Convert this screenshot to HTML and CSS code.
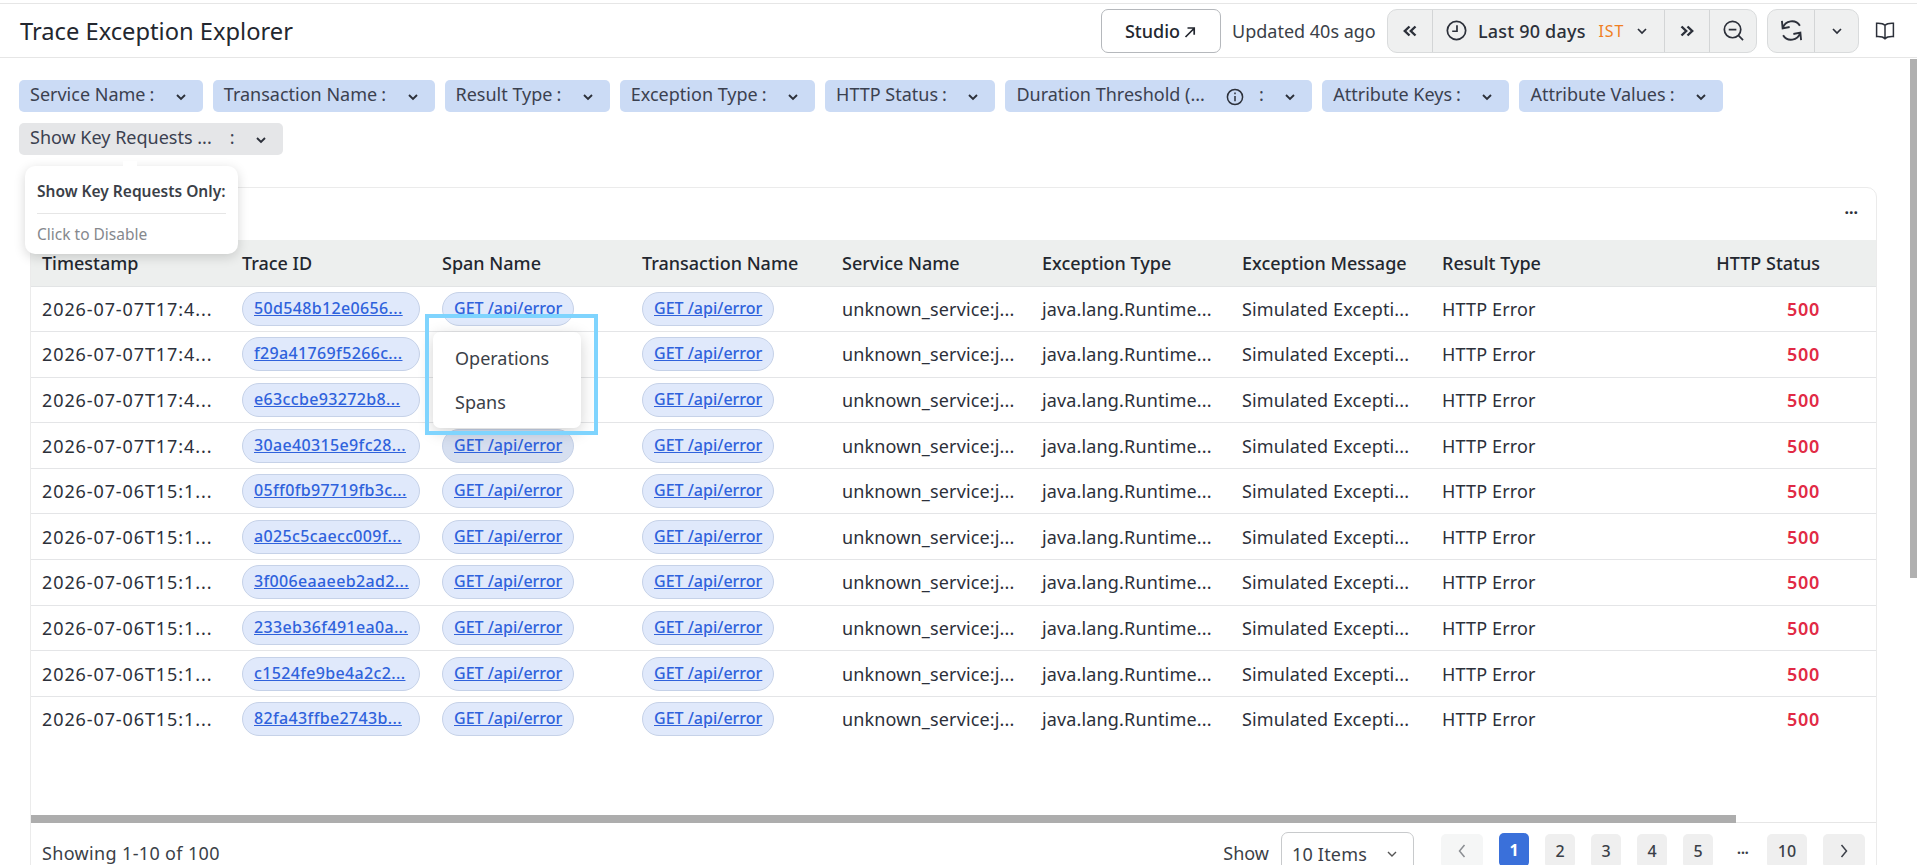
FILE: index.html
```html
<!DOCTYPE html>
<html lang="en">
<head>
  <meta charset="UTF-8" />
  <meta name="viewport" content="width=device-width, initial-scale=1.0" />
  <title>Trace Exception Explorer</title>
  <link rel="stylesheet" href="styles.css">
</head>
<body>
  <header class="top-bar">
    <h1 class="page-title">Trace Exception Explorer</h1>
    <div class="top-actions">
      <button class="studio-btn">Studio
        <svg class="ico-arrow" viewBox="0 0 14 14"><path d="M2.5 12 11 3.5M4.5 3H11.2V9.7"/></svg>
      </button>
      <span class="updated">Updated 40s ago</span>
      <div class="btn-group time-group">
        <div class="seg seg-prev"><svg class="ico-dbl" viewBox="0 0 16 14"><path d="M7.5 2.5 2.8 7l4.7 4.5M13.5 2.5 8.8 7l4.7 4.5"/></svg></div>
        <div class="seg seg-range">
          <svg class="ico-clock" viewBox="0 0 22 22"><circle cx="11" cy="11" r="9.6"/><path d="M11.5 5.5V11.8H6.5"/></svg>
          <span class="range-label">Last 90 days</span>
          <span class="range-tz">IST</span>
          <svg class="ico-chev" viewBox="0 0 12 8"><path d="M2 2 6 6l4-4"/></svg>
        </div>
        <div class="seg seg-next"><svg class="ico-dbl" viewBox="0 0 16 14"><path d="M2.5 2.5 7.2 7l-4.7 4.5M8.5 2.5 13.2 7l-4.7 4.5"/></svg></div>
        <div class="seg seg-zoom"><svg class="ico-zoom" viewBox="0 0 22 22"><circle cx="10" cy="10" r="8.6"/><path d="M6 10h8M16.4 16.4 21 21"/></svg></div>
      </div>
      <div class="btn-group refresh-group">
        <div class="seg seg-refresh"><svg class="ico-refresh" viewBox="2 2 18 18"><path d="M3.6 9A8 8 0 0 1 18.2 7M18.4 13A8 8 0 0 1 3.8 15M2.8 2.8 3.4 9.2 9.4 8M19.2 19.2 18.6 12.8 12.6 14"/></svg></div>
        <div class="seg seg-more"><svg class="ico-chev" viewBox="0 0 12 8"><path d="M2 2 6 6l4-4"/></svg></div>
      </div>
      <svg class="ico-book" viewBox="0 0 20 20"><path d="M10 4.2C8.4 2.6 5.4 2 1.6 2.2V15.6C5.4 15.4 8.4 16 10 17.6 11.6 16 14.6 15.4 18.4 15.6V2.2C14.6 2 11.6 2.6 10 4.2ZM10 4.2V18.6"/></svg>
    </div>
  </header>

  <section class="filters">
    <div class="chip"><span class="chip-text">Service Name</span><span class="colon">:</span><svg class="ico-chip" viewBox="0 0 12 8"><path d="M2 2 6 6l4-4"/></svg></div>
    <div class="chip"><span class="chip-text">Transaction Name</span><span class="colon">:</span><svg class="ico-chip" viewBox="0 0 12 8"><path d="M2 2 6 6l4-4"/></svg></div>
    <div class="chip"><span class="chip-text">Result Type</span><span class="colon">:</span><svg class="ico-chip" viewBox="0 0 12 8"><path d="M2 2 6 6l4-4"/></svg></div>
    <div class="chip"><span class="chip-text">Exception Type</span><span class="colon">:</span><svg class="ico-chip" viewBox="0 0 12 8"><path d="M2 2 6 6l4-4"/></svg></div>
    <div class="chip"><span class="chip-text">HTTP Status</span><span class="colon">:</span><svg class="ico-chip" viewBox="0 0 12 8"><path d="M2 2 6 6l4-4"/></svg></div>
    <div class="chip"><span class="chip-text">Duration Threshold (...</span><svg class="ico-info" viewBox="0 0 18 18"><circle cx="9" cy="9" r="7.6"/><path d="M9 8v5.2M9 4.6v1.6"/></svg><span class="colon">:</span><svg class="ico-chip" viewBox="0 0 12 8"><path d="M2 2 6 6l4-4"/></svg></div>
    <div class="chip"><span class="chip-text">Attribute Keys</span><span class="colon">:</span><svg class="ico-chip" viewBox="0 0 12 8"><path d="M2 2 6 6l4-4"/></svg></div>
    <div class="chip"><span class="chip-text">Attribute Values</span><span class="colon">:</span><svg class="ico-chip" viewBox="0 0 12 8"><path d="M2 2 6 6l4-4"/></svg></div>
    <div class="chip chip-off"><span class="chip-text">Show Key Requests ...</span><span class="colon colon-wide">:</span><svg class="ico-chip" viewBox="0 0 12 8"><path d="M2 2 6 6l4-4"/></svg></div>
  </section>

  <section class="card">
    <div class="card-head"><span class="card-menu">...</span></div>
    <table class="grid">
      <thead>
        <tr><th>Timestamp</th><th>Trace ID</th><th>Span Name</th><th>Transaction Name</th><th>Service Name</th><th>Exception Type</th><th>Exception Message</th><th>Result Type</th><th class="num">HTTP Status</th></tr>
      </thead>
      <tbody>
        <tr><td>2026-07-07T17:4...</td><td><a class="pill pill-id">50d548b12e0656...</a></td><td><a class="pill">GET /api/error</a></td><td><a class="pill">GET /api/error</a></td><td>unknown_service:j...</td><td>java.lang.Runtime...</td><td>Simulated Excepti...</td><td>HTTP Error</td><td class="num status">500</td></tr>
        <tr><td>2026-07-07T17:4...</td><td><a class="pill pill-id">f29a41769f5266c...</a></td><td></td><td><a class="pill">GET /api/error</a></td><td>unknown_service:j...</td><td>java.lang.Runtime...</td><td>Simulated Excepti...</td><td>HTTP Error</td><td class="num status">500</td></tr>
        <tr><td>2026-07-07T17:4...</td><td><a class="pill pill-id">e63ccbe93272b8...</a></td><td></td><td><a class="pill">GET /api/error</a></td><td>unknown_service:j...</td><td>java.lang.Runtime...</td><td>Simulated Excepti...</td><td>HTTP Error</td><td class="num status">500</td></tr>
        <tr><td>2026-07-07T17:4...</td><td><a class="pill pill-id">30ae40315e9fc28...</a></td><td><a class="pill pill-hover">GET /api/error</a></td><td><a class="pill">GET /api/error</a></td><td>unknown_service:j...</td><td>java.lang.Runtime...</td><td>Simulated Excepti...</td><td>HTTP Error</td><td class="num status">500</td></tr>
        <tr><td>2026-07-06T15:1...</td><td><a class="pill pill-id">05ff0fb97719fb3c...</a></td><td><a class="pill">GET /api/error</a></td><td><a class="pill">GET /api/error</a></td><td>unknown_service:j...</td><td>java.lang.Runtime...</td><td>Simulated Excepti...</td><td>HTTP Error</td><td class="num status">500</td></tr>
        <tr><td>2026-07-06T15:1...</td><td><a class="pill pill-id">a025c5caecc009f...</a></td><td><a class="pill">GET /api/error</a></td><td><a class="pill">GET /api/error</a></td><td>unknown_service:j...</td><td>java.lang.Runtime...</td><td>Simulated Excepti...</td><td>HTTP Error</td><td class="num status">500</td></tr>
        <tr><td>2026-07-06T15:1...</td><td><a class="pill pill-id">3f006eaaeeb2ad2...</a></td><td><a class="pill">GET /api/error</a></td><td><a class="pill">GET /api/error</a></td><td>unknown_service:j...</td><td>java.lang.Runtime...</td><td>Simulated Excepti...</td><td>HTTP Error</td><td class="num status">500</td></tr>
        <tr><td>2026-07-06T15:1...</td><td><a class="pill pill-id">233eb36f491ea0a...</a></td><td><a class="pill">GET /api/error</a></td><td><a class="pill">GET /api/error</a></td><td>unknown_service:j...</td><td>java.lang.Runtime...</td><td>Simulated Excepti...</td><td>HTTP Error</td><td class="num status">500</td></tr>
        <tr><td>2026-07-06T15:1...</td><td><a class="pill pill-id">c1524fe9be4a2c2...</a></td><td><a class="pill">GET /api/error</a></td><td><a class="pill">GET /api/error</a></td><td>unknown_service:j...</td><td>java.lang.Runtime...</td><td>Simulated Excepti...</td><td>HTTP Error</td><td class="num status">500</td></tr>
        <tr><td>2026-07-06T15:1...</td><td><a class="pill pill-id">82fa43ffbe2743b...</a></td><td><a class="pill">GET /api/error</a></td><td><a class="pill">GET /api/error</a></td><td>unknown_service:j...</td><td>java.lang.Runtime...</td><td>Simulated Excepti...</td><td>HTTP Error</td><td class="num status">500</td></tr>
      </tbody>
    </table>
    <div class="h-scroll"><div class="h-thumb"></div></div>
    <footer class="card-foot">
      <span class="showing">Showing 1-10 of 100</span>
      <div class="foot-right">
        <span class="show-label">Show</span>
        <div class="page-size">10 Items<svg class="ico-chev-thin" viewBox="0 0 12 8"><path d="M2 2 6 6l4-4"/></svg></div>
        <nav class="pager">
          <span class="page page-arrow page-dim"><svg class="ico-pg" viewBox="0 0 10 16"><path d="M7.5 2 2.5 8l5 6"/></svg></span>
          <span class="page page-on">1</span>
          <span class="page">2</span>
          <span class="page">3</span>
          <span class="page">4</span>
          <span class="page">5</span>
          <span class="page-dots">...</span>
          <span class="page page-wide">10</span>
          <span class="page page-arrow"><svg class="ico-pg" viewBox="0 0 10 16"><path d="M2.5 2 7.5 8l-5 6"/></svg></span>
        </nav>
      </div>
    </footer>
  </section>

  <div class="tooltip">
    <div class="tooltip-title">Show Key Requests Only:</div>
    <div class="tooltip-sub">Click to Disable</div>
  </div>
  <div class="context-menu">
    <div class="menu-item">Operations</div>
    <div class="menu-item">Spans</div>
  </div>
  <div class="highlight"></div>
  <div class="v-thumb"></div>
</body>
</html>
```

FILE: styles.css
```css
* {
  box-sizing: border-box;
}
html, body {
  height: 865px;
  overflow: hidden;
}
body {
  margin: 0;
  padding-top: 3px;
  position: relative;
  background: #fff;
  color: #2c303a;
  font-family: "Noto Sans", Arial, sans-serif;
  font-size: 18px;
}

/* header */
.top-bar {
  height: 55px;
  display: flex;
  align-items: center;
  justify-content: space-between;
  padding: 0 22px 0 20px;
  border-top: 1px solid #e6e6e6;
  border-bottom: 1px solid #e6e6e6;
}
.page-title {
  margin: 0;
  font-size: 23.7px;
  font-weight: 400;
  color: #23272f;
}
.top-actions {
  display: flex;
  align-items: center;
}
.studio-btn {
  width: 120px;
  height: 44px;
  display: flex;
  align-items: center;
  justify-content: center;
  gap: 3px;
  background: #fff;
  border: 1px solid #b5b8bc;
  border-radius: 7px;
  color: #23272f;
  font: 500 18px "Noto Sans", Arial, sans-serif;
}
.ico-arrow {
  width: 14px;
  height: 14px;
  margin-top: 3px;
  fill: none;
  stroke: #23272f;
  stroke-width: 1.7;
}
.updated {
  width: 155px;
  margin-left: 11px;
  white-space: nowrap;
  color: #3b3f48;
}
.btn-group {
  display: flex;
  height: 44px;
  background: #eff0f0;
  border: 1px solid #d9dbdc;
  border-radius: 10px;
}
.seg {
  display: flex;
  align-items: center;
  justify-content: center;
  border-left: 1px solid #d3d5d6;
}
.seg:first-child {
  border-left: 0;
}
.time-group {
  width: 370px;
}
.seg-prev { width: 44px; }
.seg-range {
  width: 232px;
  justify-content: flex-start;
  padding-left: 13px;
}
.seg-next { width: 45px; }
.seg-zoom { width: 47px; }
.refresh-group {
  width: 92px;
  margin-left: 10px;
}
.seg-refresh { width: 47px; }
.seg-more { width: 44px; }
.ico-dbl {
  width: 16px;
  height: 14px;
  fill: none;
  stroke: #2c303a;
  stroke-width: 2.4;
}
.ico-clock {
  width: 21px;
  height: 21px;
  fill: none;
  stroke: #2c303a;
  stroke-width: 1.8;
}
.range-label {
  margin-left: 11px;
  font-weight: 500;
  letter-spacing: 0.2px;
  white-space: nowrap;
}
.range-tz {
  margin-left: 13px;
  color: #f07f23;
  font-size: 16px;
  letter-spacing: 0.8px;
}
.ico-chev {
  width: 12px;
  height: 8px;
  fill: none;
  stroke: #2c303a;
  stroke-width: 1.7;
}
.seg-range .ico-chev {
  margin-left: 12px;
}
.ico-zoom {
  width: 21px;
  height: 21px;
  fill: none;
  stroke: #2c303a;
  stroke-width: 1.8;
}
.ico-refresh {
  width: 21px;
  height: 21px;
  fill: none;
  stroke: #2c303a;
  stroke-width: 1.6;
}
.ico-book {
  width: 20px;
  height: 20px;
  margin-left: 16px;
  fill: none;
  stroke: #2c303a;
  stroke-width: 1.5;
}

/* filter chips */
.filters {
  display: flex;
  flex-wrap: wrap;
  gap: 11px 10px;
  padding: 22px 20px 0 19px;
}
.chip {
  height: 32px;
  display: flex;
  align-items: center;
  padding: 0 16px 0 11px;
  background: #cbdbf5;
  border-radius: 5px;
  color: #3b4150;
  white-space: nowrap;
}
.chip-off {
  background: #e5e6e8;
}
.chip-text, .colon {
  margin-top: -4px;
}
.colon {
  margin-left: 4px;
}
.colon-wide {
  margin-left: 18px;
}
.ico-chip {
  width: 12px;
  height: 8px;
  margin: 2px 0 0 20.5px;
  fill: none;
  stroke: #2c303a;
  stroke-width: 1.9;
}
.ico-info {
  width: 18px;
  height: 18px;
  margin: 2px 0 0 21px;
  fill: none;
  stroke: #2c303a;
  stroke-width: 1.5;
}
.ico-info + .colon {
  margin-left: 15px;
}

/* table card */
.card {
  margin: 32px 40px 0 30px;
  height: 700px;
  border: 1px solid #ebebeb;
  border-radius: 10px 10px 0 0;
}
.card-head {
  height: 52px;
  display: flex;
  justify-content: flex-end;
  padding-right: 18px;
}
.card-menu {
  font-weight: 700;
  font-size: 16px;
  line-height: 40px;
  color: #2c303a;
}
.grid {
  width: 100%;
  table-layout: fixed;
  border-collapse: collapse;
  height: 502px;
}
.grid th, .grid td {
  width: 200px;
  padding: 0 0 0 11px;
  text-align: left;
  white-space: nowrap;
}
.grid th:last-child, .grid td:last-child {
  width: auto;
  padding-right: 56px;
  text-align: right;
}
.grid th {
  height: 46px;
  background: #edefee;
  font-weight: 500;
  color: #23272f;
  border-bottom: 1px solid #e2e4e5;
}
.grid td {
  height: 45.6px;
  border-bottom: 1px solid #e4e5e7;
  letter-spacing: 0.15px;
}
.grid td:first-child {
  letter-spacing: 0.9px;
}
.grid tr:last-child td {
  border-bottom: 0;
}
.pill {
  display: inline-block;
  height: 34px;
  line-height: 31px;
  padding: 0 11px;
  background: #e0e9fb;
  border: 1px solid #c6d2e8;
  border-radius: 17px;
  color: #2f62dc;
  font-size: 16px;
  font-weight: 500;
  letter-spacing: 0;
  text-decoration: underline;
}
.pill-id {
  width: 178px;
  letter-spacing: 0.35px;
}
.pill-hover {
  background: #d6dff0;
}
.grid .status {
  color: #e12a45;
  font-weight: 600;
  letter-spacing: 0.7px;
}
.h-scroll {
  height: 8px;
  margin-top: 73px;
  border-bottom: 1px solid #e6e6e6;
}
.h-thumb {
  width: 1705px;
  height: 8px;
  background: #adadad;
}
.card-foot {
  display: flex;
  justify-content: space-between;
  padding: 9px 11px 0 11px;
  line-height: 42px;
  color: #3b3f48;
}
.showing {
  letter-spacing: 0.35px;
}
.foot-right {
  display: flex;
  gap: 12px;
}
.page-size {
  width: 133px;
  height: 44px;
  display: flex;
  align-items: center;
  justify-content: space-between;
  padding: 0 15px 0 10px;
  border: 1px solid #c8cacc;
  border-radius: 7px;
  letter-spacing: 0.2px;
}
.ico-chev-thin {
  width: 12px;
  height: 8px;
  fill: none;
  stroke: #555;
  stroke-width: 1.4;
}
.pager {
  display: flex;
  gap: 16px;
  margin-left: 15px;
  align-items: flex-start;
}
.page {
  width: 30px;
  height: 34px;
  margin-top: 2px;
  display: flex;
  align-items: center;
  justify-content: center;
  background: #efefef;
  border-radius: 5px;
  font-weight: 500;
  font-size: 16px;
}
.page-on {
  margin-top: 1px;
  background: #3a70da;
  color: #fff;
  font-weight: 700;
}
.page-wide { width: 40px; }
.page-arrow { width: 42px; }
.page-dim { background: #f5f6f6; }
.page-dots {
  width: 14px;
  line-height: 34px;
  font-weight: 700;
  font-size: 14px;
  margin: 0 0 0 8px;
}
.ico-pg {
  width: 10px;
  height: 16px;
  fill: none;
  stroke: #3b3f48;
  stroke-width: 1.5;
}
.page-dim .ico-pg {
  stroke: #8a8d92;
}

/* floating bits */
.tooltip {
  position: absolute;
  left: 25px;
  top: 166px;
  width: 213px;
  height: 88px;
  padding: 14px 12px 0;
  background: #fff;
  border-radius: 10px;
  box-shadow: 0 3px 12px rgba(0, 0, 0, 0.16);
}
.tooltip::before {
  content: "";
  position: absolute;
  left: 98px;
  top: -5px;
  width: 14px;
  height: 5px;
  background: #fff;
}
.tooltip-title {
  padding-bottom: 11px;
  border-bottom: 1px solid #e6e6e6;
  font-size: 15.5px;
  font-weight: 600;
  color: #3b3f48;
  white-space: nowrap;
}
.tooltip-sub {
  margin-top: 9px;
  font-size: 15.5px;
  color: #85888d;
}
.context-menu {
  position: absolute;
  left: 433px;
  top: 332px;
  width: 148px;
  height: 96px;
  padding-top: 4px;
  background: #fff;
  border-radius: 7px;
  box-shadow: 0 4px 16px rgba(0, 0, 0, 0.18);
}
.menu-item {
  height: 44px;
  line-height: 44px;
  padding-left: 22px;
  color: #3b3f48;
}
.highlight {
  position: absolute;
  left: 425px;
  top: 314px;
  width: 173px;
  height: 121px;
  border: 4px solid #7fd4fe;
}
.v-thumb {
  position: absolute;
  right: 0;
  top: 59px;
  width: 7px;
  height: 519px;
  background: #b0b0b0;
}
```
